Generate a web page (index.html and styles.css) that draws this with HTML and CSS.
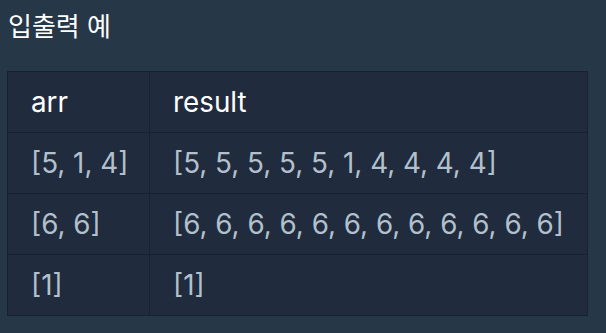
FILE: index.html
```html
<!DOCTYPE html>
<html lang="ko">
<head>
<meta charset="utf-8">
<link rel="stylesheet" href="styles.css">
</head>
<body>
<h5 class="title">입출력 예</h5>
<table class="io-table">
  <thead>
    <tr><th class="col-arr">arr</th><th>result</th></tr>
  </thead>
  <tbody>
    <tr><td>[5, 1, 4]</td><td>[5, 5, 5, 5, 5, 1, 4, 4, 4, 4]</td></tr>
    <tr><td>[6, 6]</td><td>[6, 6, 6, 6, 6, 6, 6, 6, 6, 6, 6, 6]</td></tr>
    <tr><td>[1]</td><td>[1]</td></tr>
  </tbody>
</table>
</body>
</html>
```
FILE: styles.css
```css
html, body {
  margin: 0;
  background: #263747;
}
body {
  padding: 0 18px 0 7px;
  font-family: Inter, "Noto Sans CJK KR", sans-serif;
}
.title {
  margin: 0;
  padding: 10px 0 0 1px;
  height: 71px;
  box-sizing: border-box;
  font-size: 26px;
  line-height: 34px;
  font-weight: 400;
  color: #ffffff;
}
.io-table {
  width: 100%;
  table-layout: fixed;
  border-collapse: collapse;
  background: #202b3d;
  font-size: 27.8px;
}
.io-table th,
.io-table td {
  border: 1px solid #172130;
  height: 61px;
  padding: 0 0 0 23px;
  text-align: left;
  vertical-align: middle;
  white-space: nowrap;
  box-sizing: border-box;
}
.io-table th {
  font-weight: 400;
  color: #ffffff;
}
.io-table td {
  color: #b2c0cc;
}
.col-arr {
  width: 142px;
}
```
